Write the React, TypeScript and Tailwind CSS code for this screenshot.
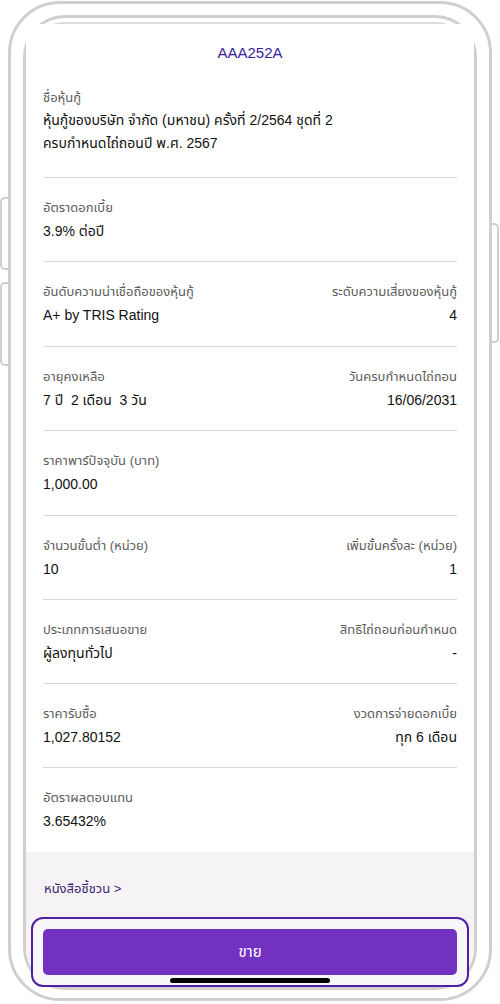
import React from "react";

const font = { fontFamily: '"Liberation Sans", "Noto Sans", "Noto Sans Thai", sans-serif' };

type RowProps = {
  label: string;
  value: React.ReactNode;
  rlabel?: string;
  rvalue?: React.ReactNode;
  pb?: string;
  last?: boolean;
};

function Row({ label, value, rlabel, rvalue, pb = "pb-[18px]", last }: RowProps) {
  return (
    <div
      className={`mx-[17px] flex justify-between pt-[19px] ${pb} ${
        last ? "" : "border-b border-[#d7d7d7]"
      }`}
    >
      <div className="flex flex-col">
        <div className="text-[13px] leading-[22px] text-[#5c5c5c]">{label}</div>
        <div className="text-[14px] leading-[24px] text-[#111111]">{value}</div>
      </div>
      {rlabel !== undefined && (
        <div className="flex flex-col items-end text-right">
          <div className="text-[13px] leading-[22px] text-[#5c5c5c]">{rlabel}</div>
          <div className="text-[14px] leading-[24px] text-[#111111]">{rvalue}</div>
        </div>
      )}
    </div>
  );
}

export default function App() {
  return (
    <div className="flex h-[1004px] w-[500px] overflow-hidden bg-white" style={font}>
      {/* left side buttons */}
      <div className="flex w-[10px] shrink-0 flex-col pt-[197px]">
        <div className="h-[73px] w-[10px] rounded-l-[5px] border-y-2 border-l-2 border-[#cfcfcf]" />
        <div className="mt-[12px] h-[84px] w-[10px] rounded-l-[5px] border-y-2 border-l-2 border-[#cfcfcf]" />
      </div>

      {/* phone frame */}
      <div className="-ml-[2px] mt-px flex h-[1000px] w-[484px] shrink-0 flex-col rounded-[52px] border-[3px] border-[#cfcfcf] px-[12px] pb-[8px] pt-[11px]">
        <div className="flex flex-1 flex-col rounded-[42px] border-[3px] border-[#cfcfcf]">
          <div className="mt-[4px] flex flex-1 flex-col rounded-t-[38px] border-t-2 border-[#dcdcdc]">
            {/* white content */}
            <div className="flex flex-col bg-white">
              <div className="pt-[18px] text-center text-[15px] leading-[22px] text-[#3a1ea0]">
                AAA252A
              </div>
              <div className="mt-[4px]">
                <Row
                  label="ชื่อหุ้นกู้"
                  value={
                    <div className="leading-[23px]">
                      <div>หุ้นกู้ของบริษัท จำกัด (มหาชน) ครั้งที่ 2/2564 ชุดที่ 2</div>
                      <div>ครบกำหนดไถ่ถอนปี พ.ศ. 2567</div>
                    </div>
                  }
                  pb="pb-[22px]"
                />
                <Row label="อัตราดอกเบี้ย" value="3.9% ต่อปี" pb="pb-[18px]" />
                <Row
                  label="อันดับความน่าเชื่อถือของหุ้นกู้"
                  value="A+ by TRIS Rating"
                  rlabel="ระดับความเสี่ยงของหุ้นกู้"
                  rvalue="4"
                  pb="pb-[19px]"
                />
                <Row
                  label="อายุคงเหลือ"
                  value={<span>7 ปี&nbsp; 2 เดือน&nbsp; 3 วัน</span>}
                  rlabel="วันครบกำหนดไถ่ถอน"
                  rvalue="16/06/2031"
                  pb="pb-[18px]"
                />
                <Row label="ราคาพาร์ปัจจุบัน (บาท)" value="1,000.00" pb="pb-[19px]" />
                <Row
                  label="จำนวนขั้นต่ำ (หน่วย)"
                  value="10"
                  rlabel="เพิ่มขั้นครั้งละ (หน่วย)"
                  rvalue="1"
                  pb="pb-[18px]"
                />
                <Row
                  label="ประเภทการเสนอขาย"
                  value="ผู้ลงทุนทั่วไป"
                  rlabel="สิทธิไถ่ถอนก่อนกำหนด"
                  rvalue="-"
                  pb="pb-[18px]"
                />
                <Row
                  label="ราคารับซื้อ"
                  value="1,027.80152"
                  rlabel="งวดการจ่ายดอกเบี้ย"
                  rvalue="ทุก 6 เดือน"
                  pb="pb-[18px]"
                />
                <Row label="อัตราผลตอบแทน" value="3.65432%" pb="pb-[19px]" last />
              </div>
            </div>

            {/* gray footer */}
            <div className="relative flex flex-1 flex-col rounded-b-[39px] bg-[#f5f3f6]">
              <div className="px-[18px] pt-[26px] text-[13px] leading-[22px] text-[#3b1f6e]">
                หนังสือชี้ชวน &gt;
              </div>
              <div className="mx-[5px] mt-[17px] rounded-[12px] border-2 border-[#4f1fa6] bg-[#f7f6f8] p-[10px]">
                <div className="flex h-[46px] items-center justify-center rounded-[5px] bg-[#7331c2] text-[15px] text-white">
                  ขาย
                </div>
              </div>
              <div className="absolute bottom-[4px] left-1/2 h-[5px] w-[160px] -translate-x-1/2 rounded-full bg-black" />
            </div>
          </div>
        </div>
      </div>

      {/* right side button */}
      <div className="-ml-[2px] flex w-[10px] shrink-0 flex-col pt-[223px]">
        <div className="h-[120px] w-[9px] rounded-r-[5px] border-y-2 border-r-2 border-[#cfcfcf]" />
      </div>
    </div>
  );
}
